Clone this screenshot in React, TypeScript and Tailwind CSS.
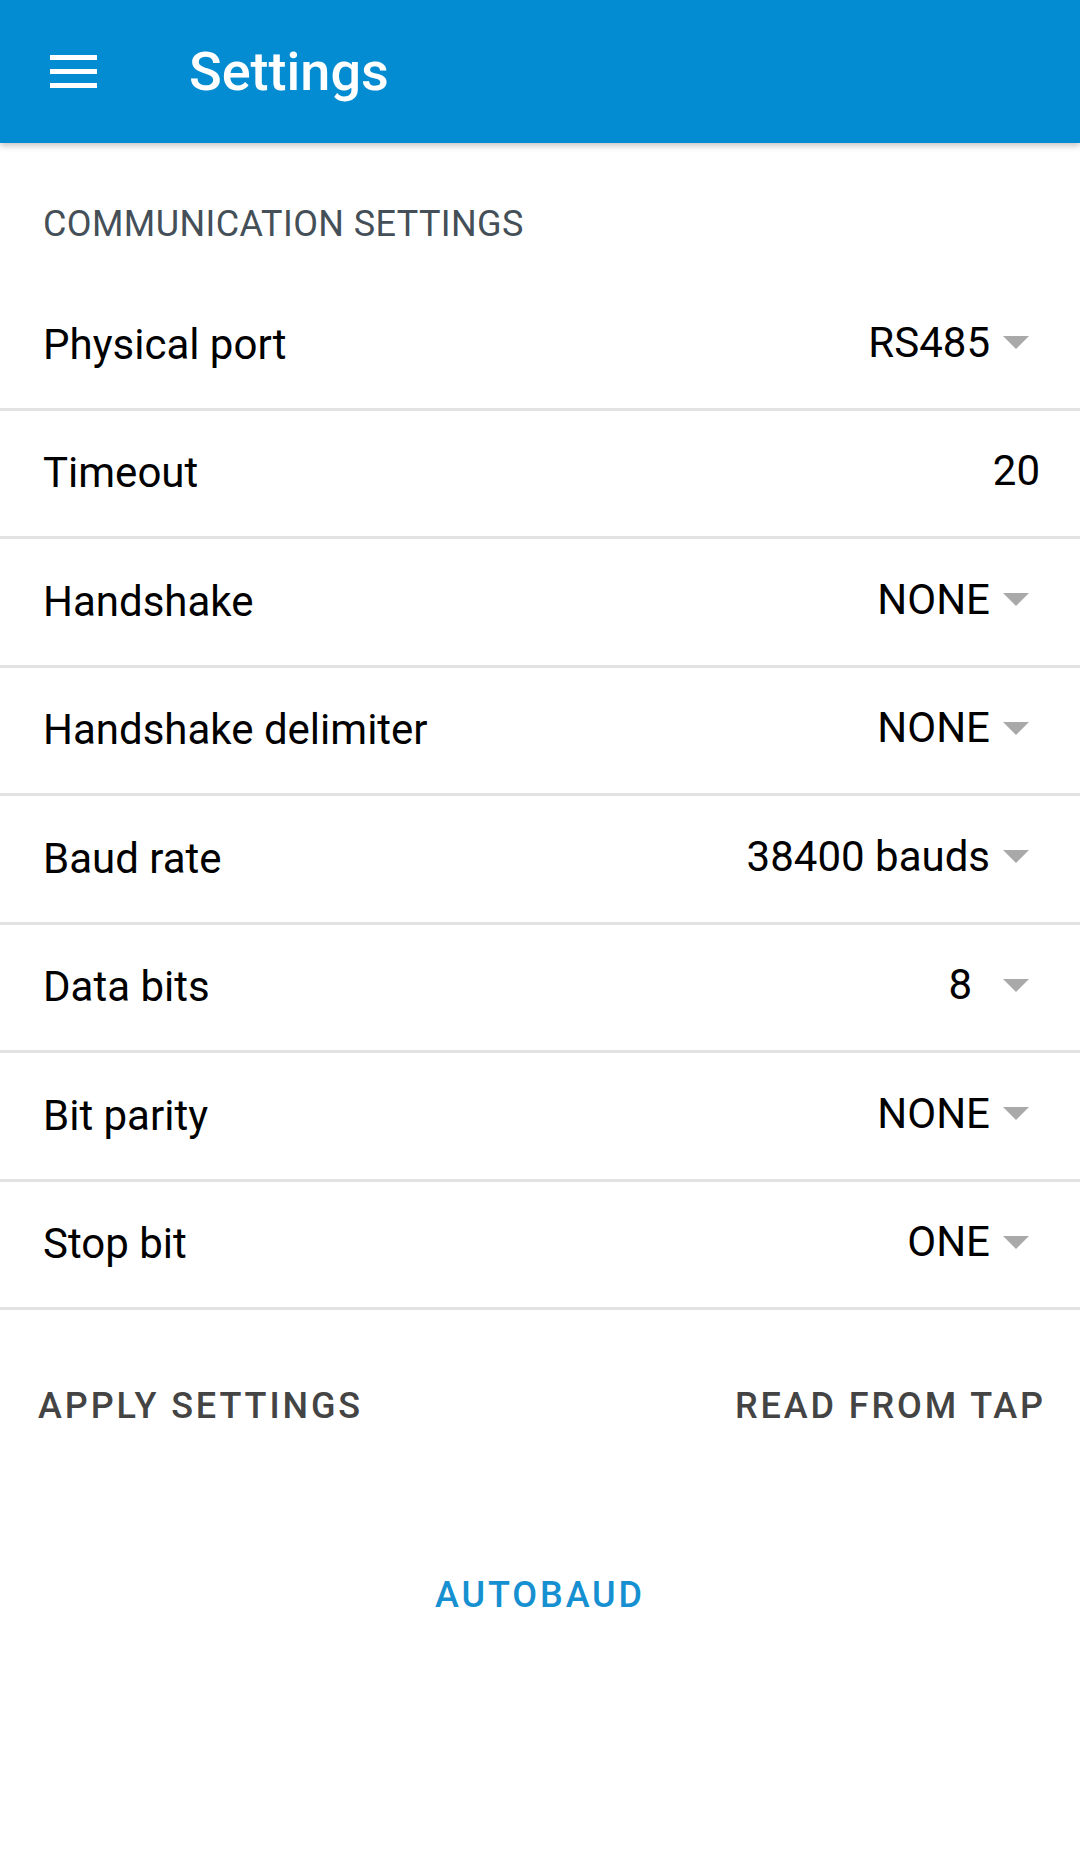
import React from "react";

type Row = { label: string; value: string; arrow: boolean; narrow?: boolean };

const rows: Row[] = [
  { label: "Physical port", value: "RS485", arrow: true },
  { label: "Timeout", value: "20", arrow: false },
  { label: "Handshake", value: "NONE", arrow: true },
  { label: "Handshake delimiter", value: "NONE", arrow: true },
  { label: "Baud rate", value: "38400 bauds", arrow: true },
  { label: "Data bits", value: "8", arrow: true, narrow: true },
  { label: "Bit parity", value: "NONE", arrow: true },
  { label: "Stop bit", value: "ONE", arrow: true },
];

function Arrow() {
  return (
    <svg width="26" height="13" viewBox="0 0 26 13" className="block">
      <polygon points="0,0 26,0 13,13" fill="#a9a9a9" />
    </svg>
  );
}

export default function App() {
  return (
    <div
      className="w-[1080px] h-[1853px] bg-white overflow-hidden"
      style={{ fontFamily: "Roboto, 'Noto Sans', 'Liberation Sans', sans-serif" }}
    >
      <header className="relative z-10 h-[143px] bg-[#038cd2] flex items-center shadow-[0_3px_6px_rgba(0,0,0,0.22)]">
        <div className="ml-[50px] w-[47px] flex flex-col gap-[9.5px]">
          <div className="h-[4.5px] bg-white" />
          <div className="h-[4.5px] bg-white" />
          <div className="h-[4.5px] bg-white" />
        </div>
        <h1 className="ml-[92px] text-[54px] leading-[60px] font-medium text-white">Settings</h1>
      </header>

      <div className="pt-[61px] pb-[38px] pl-[43px]">
        <div className="text-[36px] leading-[40px] text-[#444f58] tracking-[0.4px]">
          COMMUNICATION SETTINGS
        </div>
      </div>

      <div>
        {rows.map((r) => (
          <div
            key={r.label}
            className="h-[128.5px] border-b-[3px] border-[#e2e2e2] flex items-center justify-between pl-[43px]"
          >
            <span className="text-[42px] leading-[50px] text-black">{r.label}</span>
            {r.arrow ? (
              <div className="flex items-center pr-[51px] mb-[4px]">
                <span className="text-[42px] leading-[50px] text-black">{r.value}</span>
                <div className={r.narrow ? "ml-[31px]" : "ml-[13px]"}>
                  <Arrow />
                </div>
              </div>
            ) : (
              <div className="pr-[40px] mb-[4px]">
                <span className="text-[42px] leading-[50px] text-black">{r.value}</span>
              </div>
            )}
          </div>
        ))}
      </div>

      <div className="mt-[76px] flex justify-between pl-[38px] pr-[34px]">
        <span className="text-[36px] leading-[40px] font-medium tracking-[2.9px] text-[#444444]">
          APPLY SETTINGS
        </span>
        <span className="text-[36px] leading-[40px] font-medium tracking-[2.9px] text-[#444444]">
          READ FROM TAP
        </span>
      </div>

      <div className="mt-[149px] flex justify-center">
        <span className="text-[36px] leading-[40px] font-medium tracking-[2.9px] text-[#1690d0]">
          AUTOBAUD
        </span>
      </div>
    </div>
  );
}
